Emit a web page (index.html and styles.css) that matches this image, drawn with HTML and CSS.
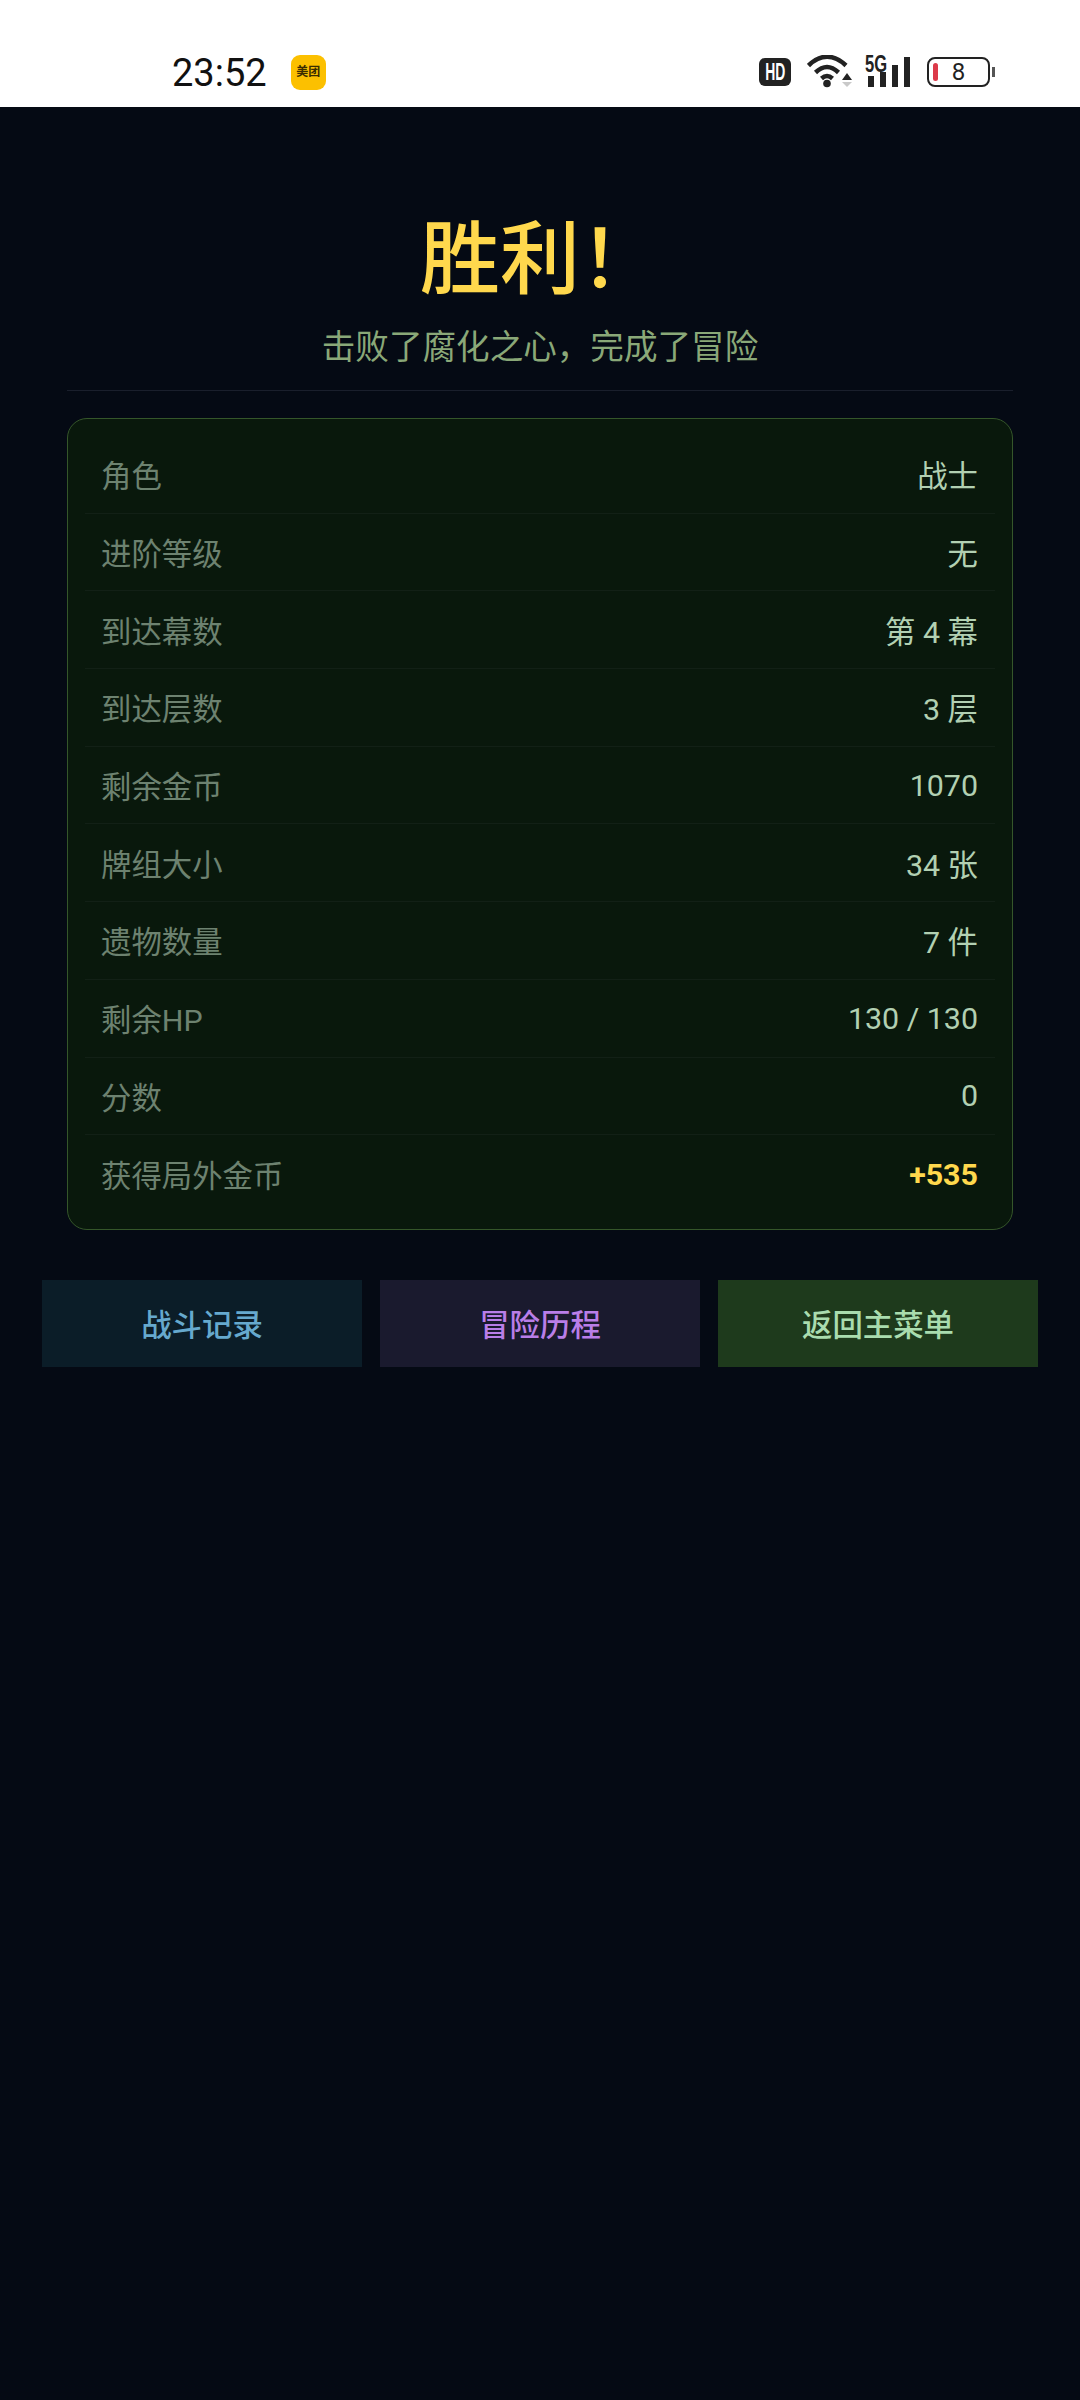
FILE: index.html
```html
<!DOCTYPE html>
<html lang="zh-CN">
<head>
<meta charset="utf-8">
<title>胜利</title>
<link rel="stylesheet" href="styles.css">
</head>
<body>
<header class="status">
  <div class="status-left">
    <span class="time">23:52</span>
    <span class="app-badge">美团</span>
  </div>
  <div class="status-right">
    <span class="hd"><span class="hd-text">HD</span></span>
    <svg class="wifi" width="45" height="34" viewBox="0 0 45 34">
      <path d="M1.500 10.500Q20 -7 39 10.500" fill="none" stroke="#222" stroke-width="4.500"/>
      <path d="M8.500 17.500Q20 6.500 31.500 17.500" fill="none" stroke="#222" stroke-width="4.500"/>
      <path d="M14.500 23.500Q20 18.500 25.500 23.500" fill="none" stroke="#222" stroke-width="4.500"/>
      <circle cx="20" cy="28.500" r="3.800" fill="#222"/>
      <path d="M35 25H45L40 18Z" fill="#222"/>
      <path d="M35 27H45L40 32Z" fill="#c9c9c9"/>
    </svg>
    <span class="signal">
      <span class="five-g">5G</span>
      <span class="bars">
        <i class="bar bar-1"></i><i class="bar bar-2"></i><i class="bar bar-3"></i><i class="bar bar-4"></i>
      </span>
    </span>
    <span class="battery"><i class="level"></i><span class="pct">8</span></span>
    <i class="battery-cap"></i>
  </div>
</header>
<main class="screen">
  <h1 class="title">胜利！</h1>
  <p class="subtitle">击败了腐化之心，完成了冒险</p>
  <section class="card">
    <div class="row"><span class="label">角色</span><span class="value">战士</span></div>
    <div class="row"><span class="label">进阶等级</span><span class="value">无</span></div>
    <div class="row"><span class="label">到达幕数</span><span class="value">第 4 幕</span></div>
    <div class="row"><span class="label">到达层数</span><span class="value">3 层</span></div>
    <div class="row"><span class="label">剩余金币</span><span class="value">1070</span></div>
    <div class="row"><span class="label">牌组大小</span><span class="value">34 张</span></div>
    <div class="row"><span class="label">遗物数量</span><span class="value">7 件</span></div>
    <div class="row"><span class="label">剩余HP</span><span class="value">130 / 130</span></div>
    <div class="row"><span class="label">分数</span><span class="value">0</span></div>
    <div class="row"><span class="label">获得局外金币</span><span class="value gold">+535</span></div>
  </section>
  <nav class="actions">
    <button class="btn btn-blue">战斗记录</button>
    <button class="btn btn-purple">冒险历程</button>
    <button class="btn btn-green">返回主菜单</button>
  </nav>
</main>
</body>
</html>
```
FILE: styles.css
```css
* { box-sizing: border-box; }
html, body { margin: 0; padding: 0; }
body {
  width: 1080px;
  height: 2400px;
  background: #050a14;
  font-family: Roboto, "Noto Sans CJK SC", sans-serif;
  display: flex;
  flex-direction: column;
}
.status {
  height: 107px;
  background: #fff;
  padding: 52px 85px 0 172px;
  display: flex;
  justify-content: space-between;
  align-items: flex-start;
}
.status-left { display: flex; align-items: center; gap: 24px; height: 40px; }
.time { margin-top: 2px; font-size: 38px; line-height: 40px; color: #111; white-space: nowrap; }
.app-badge {
  width: 35px; height: 35px;
  border-radius: 9px;
  background: #fcc000;
  color: #3a2c00;
  font-size: 12px;
  font-weight: 700;
  line-height: 35px;
  text-align: center;
  white-space: nowrap;
}
.status-right { display: flex; align-items: center; height: 40px; }
.hd {
  width: 32px; height: 28px;
  background: #222;
  color: #fff;
  border-radius: 6px;
  display: flex; align-items: center; justify-content: center;
  margin-right: 16px;
}
.hd-text {
  display: block;
  font-family: "Liberation Sans", sans-serif;
  font-weight: 700;
  font-size: 24px;
  line-height: 28px;
  transform: scaleX(0.58);
}
.wifi { margin-right: 13px; }
.signal { position: relative; width: 46px; height: 34px; margin-right: 16px; }
.five-g {
  position: absolute; left: 0; top: -1px;
  font-family: "Liberation Sans", sans-serif;
  font-weight: 700;
  font-size: 23px;
  line-height: 20px;
  color: #222;
  transform: scaleX(0.72);
  transform-origin: left;
}
.bars { position: absolute; left: 3px; bottom: 2px; display: flex; align-items: flex-end; gap: 6px; }
.bar { display: block; width: 6px; background: #222; }
.bar-1 { height: 11px; }
.bar-2 { height: 15px; }
.bar-3 { height: 22px; }
.bar-4 { height: 30px; }
.battery {
  position: relative;
  width: 63px; height: 30px;
  border: 2px solid #222;
  border-radius: 8px;
  display: flex; align-items: center; justify-content: center;
}
.level { position: absolute; left: 4px; top: 4px; width: 5px; height: 18px; background: #dc3a4a; border-radius: 3px; }
.pct { font-size: 24px; line-height: 26px; color: #222; }
.battery-cap { display: block; width: 3px; height: 10px; background: #555; margin-left: 2px; }

.screen { flex: 1; display: flex; flex-direction: column; padding: 0 42px; }
.title {
  margin: 100px 0 0;
  font-size: 80px;
  line-height: 106px;
  font-weight: 500;
  color: #ffd84d;
  text-align: center;
}
.subtitle {
  margin: 11px 25px 0;
  padding-bottom: 18px;
  border-bottom: 1px solid #1a1f2c;
  font-size: 33.600px;
  line-height: 48px;
  color: #8aa878;
  text-align: center;
}
.card {
  margin: 27px 25px 0;
  padding: 17px 17px 16px;
  background: #09180c;
  border: 1px solid #35562a;
  border-radius: 20px;
}
.row {
  height: 77.700px;
  padding: 0 17px 0 16px;
  display: flex;
  justify-content: space-between;
  align-items: center;
  border-bottom: 1px solid #122016;
  font-size: 30.400px;
}
.row:last-child { border-bottom: 0; }
.label { color: #6d8270; }
.value { color: #b2d0b2; }
.gold { color: #ffd84d; font-weight: 700; }
.actions { margin-top: 50px; display: flex; gap: 18px; }
.btn {
  flex: 1;
  height: 87px;
  border: 0;
  border-radius: 0;
  font-family: inherit;
  font-size: 30.400px;
  font-weight: 500;
}
.btn-blue { background: #0b1d28; color: #66a9ce; }
.btn-purple { background: #1a1a2e; color: #b97ee8; }
.btn-green { background: #1e3a1c; color: #a9dcae; }
```
